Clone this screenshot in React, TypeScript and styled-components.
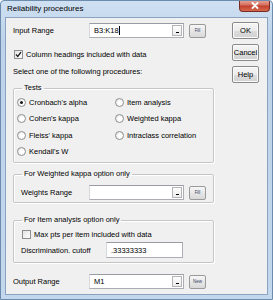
import React from 'react';
import styled, { createGlobalStyle } from 'styled-components';

const GlobalStyle = createGlobalStyle`
  html, body {
    margin: 0;
    padding: 0;
    background: #ffffff;
  }
  body {
    font-family: 'Liberation Sans', Arial, sans-serif;
  }
`;

const Window = styled.div`
  width: 273px;
  height: 300px;
  box-sizing: border-box;
  display: flex;
  flex-direction: column;
  background: linear-gradient(#cfe0f2, #bdd3ea 40px, #c3d7ed);
  border: 1px solid #6d8bad;
  border-radius: 4px 4px 0 0;
  padding: 0 4px 4px 4px;
  overflow: hidden;
`;

const TitleBar = styled.div`
  height: 16px;
  display: flex;
  align-items: center;
  justify-content: space-between;
  padding-left: 2px;
`;

const Title = styled.span`
  font-size: 8px;
  color: #000;
  line-height: 1;
  margin-top: -1px;
`;

const CloseButton = styled.div`
  width: 29px;
  height: 11px;
  align-self: flex-start;
  margin-top: -1px;
  margin-right: -2px;
  border: 1px solid #7b2b24;
  border-top: none;
  border-radius: 0 0 4px 4px;
  background: linear-gradient(#e9a99b, #d5705f 45%, #c4402f 55%, #d66a4c);
  display: flex;
  align-items: center;
  justify-content: center;
`;

const Body = styled.div`
  flex: 1;
  background: #f0f0f0;
  border: 1px solid #8aa3c0;
  display: flex;
  padding: 4px 0 0 7px;
  font-size: 7.5px;
  color: #000;
`;

const Main = styled.div`
  width: 201px;
  display: flex;
  flex-direction: column;
`;

const Side = styled.div`
  display: flex;
  flex-direction: column;
  gap: 5px;
  margin-left: 18px;
`;

const DialogButton = styled.button`
  width: 27px;
  height: 17px;
  padding: 0;
  box-sizing: border-box;
  border: 1px solid #8a8a8a;
  border-radius: 2px;
  background: linear-gradient(#f6f6f6, #ebebeb 50%, #dcdcdc 51%, #d2d2d2);
  box-shadow: inset 0 0 0 1px #fbfbfb;
  font-family: 'Liberation Sans', Arial, sans-serif;
  font-size: 7.5px;
  color: #000;
`;

const Row = styled.div<{ $top?: number; $indent?: number }>`
  display: flex;
  align-items: center;
  margin-top: ${p => p.$top ?? 0}px;
  padding-left: ${p => p.$indent ?? 0}px;
`;

const Label = styled.span<{ $width?: number }>`
  width: ${p => (p.$width ? `${p.$width}px` : 'auto')};
  flex-shrink: 0;
  white-space: nowrap;
`;

const Field = styled.div<{ $width: number; $height?: number }>`
  width: ${p => p.$width}px;
  height: ${p => p.$height ?? 15}px;
  box-sizing: border-box;
  background: #fff;
  border: 1px solid #abadb3;
  border-top-color: #9a9ca3;
  border-left-color: #d7d9de;
  display: flex;
  align-items: center;
  padding-left: 4px;
`;

const Value = styled.span`
  flex: 1;
  white-space: nowrap;
  font-size: 7.5px;
`;

const Caret = styled.span`
  display: inline-block;
  width: 1px;
  height: 9px;
  background: #000;
  vertical-align: middle;
  margin-left: 0.5px;
`;

const Collapse = styled.div`
  width: 10px;
  height: 11px;
  margin-right: 1px;
  box-sizing: border-box;
  border: 1px solid #b4b4b4;
  background: linear-gradient(#fdfdfd, #ececec);
  display: flex;
  align-items: flex-end;
  justify-content: center;
  padding-bottom: 2px;
  &::after {
    content: '';
    width: 3px;
    height: 1px;
    background: #000;
  }
`;

const SmallButton = styled.div`
  width: 17px;
  height: 14px;
  margin-left: 5px;
  box-sizing: border-box;
  border: 1px solid #9a9a9a;
  border-radius: 2px;
  background: linear-gradient(#f7f7f7, #e6e6e6 50%, #d9d9d9);
  display: flex;
  align-items: center;
  justify-content: center;
  font-size: 4.5px;
  color: #2f4166;
`;

const Check = styled.div`
  width: 9px;
  height: 9px;
  box-sizing: border-box;
  border: 1px solid #8f8f8f;
  background: linear-gradient(135deg, #e3e3e3, #ffffff);
  margin-right: 3px;
  display: flex;
  align-items: center;
  justify-content: center;
  flex-shrink: 0;
`;

const Group = styled.fieldset<{ $height: number; $top: number }>`
  margin: ${p => p.$top}px 0 0 0;
  padding: 0 0 0 3px;
  height: ${p => p.$height}px;
  box-sizing: border-box;
  border: 1px solid #c6c6c6;
  border-radius: 2px;
  box-shadow: inset 1px 1px 0 #fff, 1px 1px 0 #fff;
  min-inline-size: 0;
`;

const Legend = styled.legend`
  padding: 0 2px;
  margin-left: 5px;
  font-size: 7.5px;
  line-height: 8px;
`;

const RadioGrid = styled.div`
  display: grid;
  grid-template-columns: 98px 1fr;
  row-gap: 5.3px;
  margin-top: 5px;
`;

const RadioItem = styled.label`
  display: flex;
  align-items: center;
  height: 11px;
  white-space: nowrap;
`;

const RadioDot = styled.span<{ $checked?: boolean }>`
  width: 9px;
  height: 9px;
  box-sizing: border-box;
  border-radius: 50%;
  border: 1px solid #8e8f8f;
  background: radial-gradient(circle at 60% 60%, #ffffff 30%, #dcdcdc);
  margin-right: 3px;
  display: flex;
  align-items: center;
  justify-content: center;
  &::after {
    content: '';
    width: 3px;
    height: 3px;
    border-radius: 50%;
    background: ${p => (p.$checked ? '#1a1a1a' : 'transparent')};
  }
`;

const CheckMark = () => (
  <svg width="7" height="7" viewBox="0 0 7 7">
    <path d="M1 3.5 L2.8 5.5 L6 1.2" fill="none" stroke="#222" strokeWidth="1.4" />
  </svg>
);

const CloseGlyph = () => (
  <svg width="8" height="7" viewBox="0 0 8 7">
    <path d="M1.5 1 L6.5 6 M6.5 1 L1.5 6" stroke="#fff" strokeWidth="1.8" strokeLinecap="round" />
  </svg>
);

type RangeProps = {
  label: string;
  value?: string;
  caret?: boolean;
  button: string;
  labelWidth: number;
  top: number;
  indent?: number;
};

const RangeRow: React.FC<RangeProps> = ({ label, value, caret, button, labelWidth, top, indent }) => (
  <Row $top={top} $indent={indent}>
    <Label $width={labelWidth}>{label}</Label>
    <Field $width={95}>
      <Value>
        {value}
        {caret && <Caret />}
      </Value>
      <Collapse />
    </Field>
    <SmallButton>{button}</SmallButton>
  </Row>
);

const tests = [
  { name: "Cronbach's alpha", checked: true },
  { name: 'Item analysis' },
  { name: "Cohen's kappa" },
  { name: 'Weighted kappa' },
  { name: "Fleiss' kappa" },
  { name: 'Intraclass correlation' },
  { name: "Kendall's W" },
];

export default function App() {
  return (
    <>
      <GlobalStyle />
      <Window>
        <TitleBar>
          <Title>Reliability procedures</Title>
          <CloseButton>
            <CloseGlyph />
          </CloseButton>
        </TitleBar>
        <Body>
          <Main>
            <RangeRow label="Input Range" value="B3:K18" caret button="Fill" labelWidth={76} top={1} />
            <Row $top={12} $indent={1}>
              <Check>
                <CheckMark />
              </Check>
              <Label>Column headings included with data</Label>
            </Row>
            <Row $top={8}>
              <Label>Select one of the following procedures:</Label>
            </Row>
            <Group $top={8} $height={79}>
              <Legend>Tests</Legend>
              <RadioGrid>
                {tests.map(t => (
                  <RadioItem key={t.name}>
                    <RadioDot $checked={t.checked} />
                    {t.name}
                  </RadioItem>
                ))}
              </RadioGrid>
            </Group>
            <Group $top={7} $height={33}>
              <Legend>For Weighted kappa option only</Legend>
              <RangeRow label="Weights Range" button="Fill" labelWidth={68} top={7} indent={4} />
            </Group>
            <Group $top={13} $height={47}>
              <Legend>For Item analysis option only</Legend>
              <Row $top={6} $indent={5}>
                <Check />
                <Label>Max pts per item included with data</Label>
              </Row>
              <Row $top={3} $indent={4}>
                <Label $width={85}>Discrimination. cutoff</Label>
                <Field $width={77} $height={16}>
                  <Value>.33333333</Value>
                </Field>
              </Row>
            </Group>
            <RangeRow label="Output Range" value="M1" button="New" labelWidth={76} top={11} />
          </Main>
          <Side>
            <DialogButton>OK</DialogButton>
            <DialogButton>Cancel</DialogButton>
            <DialogButton>Help</DialogButton>
          </Side>
        </Body>
      </Window>
    </>
  );
}
